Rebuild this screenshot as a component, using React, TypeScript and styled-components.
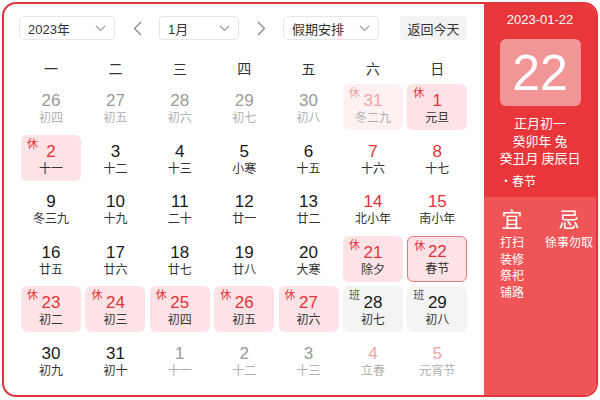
import React from "react";
import styled, { createGlobalStyle } from "styled-components";

const Global = createGlobalStyle`
  html, body { margin: 0; padding: 0; background: #fff; }
  body { font-family: "Liberation Sans", "Noto Sans CJK SC", Arial, sans-serif; }
  * { box-sizing: border-box; }
`;

const RED = "#e6323a";

const Frame = styled.div`
  margin: 2px;
  width: 596px;
  height: 395px;
  border: 2px solid #e0363b;
  border-radius: 14px;
  overflow: hidden;
  display: flex;
  background: #fff;
`;

const Left = styled.div`
  flex: 1;
  padding: 12px 0 0 15px;
`;

const Toolbar = styled.div`
  display: flex;
  align-items: center;
  height: 24px;
  gap: 12px;
`;

const Select = styled.div<{ $w: number }>`
  width: ${(p) => p.$w}px;
  height: 24px;
  border: 1px solid #e6e6e6;
  border-radius: 4px;
  display: flex;
  align-items: center;
  justify-content: space-between;
  padding: 0 8px 0 8px;
  font-size: 13px;
  color: #333;
`;

const Arrow = styled.div`
  width: 20px;
  height: 24px;
  display: flex;
  align-items: center;
  justify-content: center;
`;

const TodayBtn = styled.div`
  margin-left: 9px;
  width: 67px;
  height: 24px;
  border-radius: 4px;
  background: #f3f3f3;
  display: flex;
  align-items: center;
  justify-content: center;
  font-size: 13px;
  color: #333;
`;

const Weekdays = styled.div`
  margin: 16px 0 0 2px;
  display: grid;
  grid-template-columns: repeat(7, 60px);
  column-gap: 4.4px;
  height: 24px;
  align-items: center;
`;

const Weekday = styled.div`
  text-align: center;
  font-size: 14px;
  color: #333;
`;

const Grid = styled.div`
  margin: 4px 0 0 2px;
  display: grid;
  grid-template-columns: repeat(7, 60px);
  grid-auto-rows: 46px;
  column-gap: 4.4px;
  row-gap: 4.5px;
`;

type Kind = "normal" | "rest" | "restFaded" | "work";

const Cell = styled.div<{ $kind: Kind; $sel?: boolean }>`
  position: relative;
  border-radius: 6px;
  text-align: center;
  background: ${(p) =>
    p.$kind === "rest"
      ? "#fde3e5"
      : p.$kind === "restFaded"
      ? "#fdf1f2"
      : p.$kind === "work"
      ? "#f4f4f4"
      : "transparent"};
  border: ${(p) => (p.$sel ? "1.5px solid #e7777d" : "none")};
  padding-top: ${(p) => (p.$sel ? "5.5px" : "7px")};
`;

const Badge = styled.span<{ $c: string }>`
  position: absolute;
  top: 3px;
  left: 6px;
  font-size: 11px;
  line-height: 13px;
  color: ${(p) => p.$c};
`;

const Num = styled.div<{ $c: string }>`
  font-size: 17px;
  line-height: 20px;
  color: ${(p) => p.$c};
`;

const Lunar = styled.div<{ $c: string }>`
  font-size: 12px;
  line-height: 14px;
  color: ${(p) => p.$c};
`;

const Right = styled.div`
  width: 112px;
  display: flex;
  flex-direction: column;
  background: #ef5456;
`;

const Top = styled.div`
  background: #e9363a;
  height: 193px;
  padding-top: 8px;
  display: flex;
  flex-direction: column;
  align-items: center;
  color: #fff;
`;

const DateText = styled.div`
  font-size: 13px;
  line-height: 16px;
`;

const BigBox = styled.div`
  margin-top: 11px;
  width: 81px;
  height: 67px;
  border-radius: 6px;
  background: #f29597;
  display: flex;
  align-items: center;
  justify-content: center;
  font-size: 50px;
  color: #fff;
`;

const LunarInfo = styled.div`
  margin-top: 8px;
  font-size: 13px;
  line-height: 17.5px;
  text-align: center;
  font-family: "Noto Sans CJK SC", "Liberation Sans", sans-serif;
`;

const Festival = styled.div`
  align-self: flex-start;
  margin: 6px 0 0 16px;
  font-size: 12px;
  line-height: 16px;
  font-family: "Noto Sans CJK SC", sans-serif;
`;

const Bottom = styled.div`
  display: flex;
  padding: 10px 0 0 16px;
  gap: 21px;
  color: #fff;
  font-family: "Noto Sans CJK SC", sans-serif;
`;

const Col = styled.div`
  display: flex;
  flex-direction: column;
  align-items: center;
`;

const Head = styled.div`
  font-size: 21px;
  line-height: 22px;
  margin-bottom: 5px;
`;

const Item = styled.div`
  font-size: 12px;
  line-height: 16.5px;
`;

const Chevron = () => (
  <svg width="11" height="7" viewBox="0 0 11 7" fill="none">
    <path d="M1 1l4.5 4.5L10 1" stroke="#999" strokeWidth="1.1" />
  </svg>
);

const LeftArrow = () => (
  <svg width="9" height="15" viewBox="0 0 9 15" fill="none">
    <path d="M8 1L1.5 7.5L8 14" stroke="#888" strokeWidth="1.3" />
  </svg>
);
const RightArrow = () => (
  <svg width="9" height="15" viewBox="0 0 9 15" fill="none">
    <path d="M1 1l6.5 6.5L1 14" stroke="#888" strokeWidth="1.3" />
  </svg>
);

type Day = {
  n: number;
  l: string;
  t?: "other" | "otherRed" | "red";
  k?: Kind;
  sel?: boolean;
};

const days: Day[] = [
  { n: 26, l: "初四", t: "other" },
  { n: 27, l: "初五", t: "other" },
  { n: 28, l: "初六", t: "other" },
  { n: 29, l: "初七", t: "other" },
  { n: 30, l: "初八", t: "other" },
  { n: 31, l: "冬二九", t: "otherRed", k: "restFaded" },
  { n: 1, l: "元旦", t: "red", k: "rest" },
  { n: 2, l: "十一", t: "red", k: "rest" },
  { n: 3, l: "十二" },
  { n: 4, l: "十三" },
  { n: 5, l: "小寒" },
  { n: 6, l: "十五" },
  { n: 7, l: "十六", t: "red" },
  { n: 8, l: "十七", t: "red" },
  { n: 9, l: "冬三九" },
  { n: 10, l: "十九" },
  { n: 11, l: "二十" },
  { n: 12, l: "廿一" },
  { n: 13, l: "廿二" },
  { n: 14, l: "北小年", t: "red" },
  { n: 15, l: "南小年", t: "red" },
  { n: 16, l: "廿五" },
  { n: 17, l: "廿六" },
  { n: 18, l: "廿七" },
  { n: 19, l: "廿八" },
  { n: 20, l: "大寒" },
  { n: 21, l: "除夕", t: "red", k: "rest" },
  { n: 22, l: "春节", t: "red", k: "rest", sel: true },
  { n: 23, l: "初二", t: "red", k: "rest" },
  { n: 24, l: "初三", t: "red", k: "rest" },
  { n: 25, l: "初四", t: "red", k: "rest" },
  { n: 26, l: "初五", t: "red", k: "rest" },
  { n: 27, l: "初六", t: "red", k: "rest" },
  { n: 28, l: "初七", k: "work" },
  { n: 29, l: "初八", k: "work" },
  { n: 30, l: "初九" },
  { n: 31, l: "初十" },
  { n: 1, l: "十一", t: "other" },
  { n: 2, l: "十二", t: "other" },
  { n: 3, l: "十三", t: "other" },
  { n: 4, l: "立春", t: "otherRed" },
  { n: 5, l: "元宵节", t: "otherRed" },
];

const numColor = (d: Day) =>
  d.t === "other"
    ? "#9a9a9a"
    : d.t === "otherRed"
    ? "#f2a2a6"
    : d.t === "red"
    ? RED
    : "#1a1a1a";

const lunarColor = (d: Day) =>
  d.t === "other" || d.t === "otherRed" ? "#b0b0b0" : "#333";

export default function App() {
  return (
    <>
      <Global />
      <Frame>
        <Left>
          <Toolbar>
            <Select $w={96}>
              <span>2023年</span>
              <Chevron />
            </Select>
            <Arrow>
              <LeftArrow />
            </Arrow>
            <Select $w={80}>
              <span>1月</span>
              <Chevron />
            </Select>
            <Arrow>
              <RightArrow />
            </Arrow>
            <Select $w={96}>
              <span>假期安排</span>
              <Chevron />
            </Select>
            <TodayBtn>返回今天</TodayBtn>
          </Toolbar>
          <Weekdays>
            {["一", "二", "三", "四", "五", "六", "日"].map((w) => (
              <Weekday key={w}>{w}</Weekday>
            ))}
          </Weekdays>
          <Grid>
            {days.map((d, i) => (
              <Cell key={i} $kind={d.k ?? "normal"} $sel={d.sel}>
                {(d.k === "rest" || d.k === "restFaded") && (
                  <Badge $c={d.k === "restFaded" ? "#f2a2a6" : RED}>休</Badge>
                )}
                {d.k === "work" && <Badge $c="#555">班</Badge>}
                <Num $c={numColor(d)}>{d.n}</Num>
                <Lunar $c={lunarColor(d)}>{d.l}</Lunar>
              </Cell>
            ))}
          </Grid>
        </Left>
        <Right>
          <Top>
            <DateText>2023-01-22</DateText>
            <BigBox>22</BigBox>
            <LunarInfo>
              <div>正月初一</div>
              <div>癸卯年 兔</div>
              <div>癸丑月 庚辰日</div>
            </LunarInfo>
            <Festival>•春节</Festival>
          </Top>
          <Bottom>
            <Col>
              <Head>宜</Head>
              <Item>打扫</Item>
              <Item>装修</Item>
              <Item>祭祀</Item>
              <Item>铺路</Item>
            </Col>
            <Col>
              <Head>忌</Head>
              <Item>徐事勿取</Item>
            </Col>
          </Bottom>
        </Right>
      </Frame>
    </>
  );
}
